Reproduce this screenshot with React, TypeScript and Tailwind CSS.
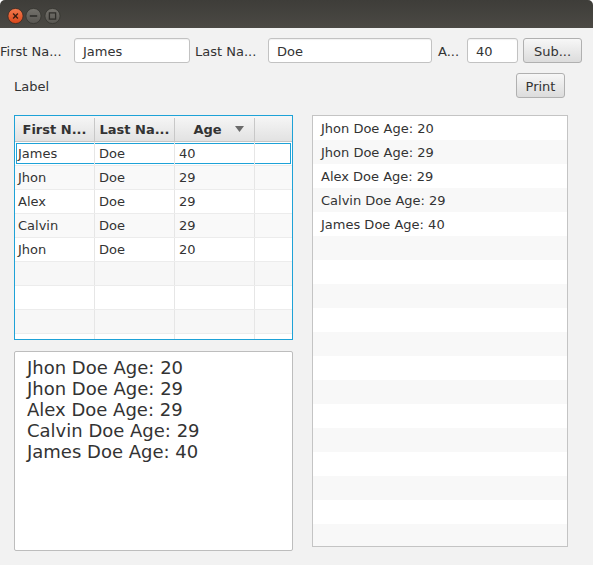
import React from 'react';

interface Person {
  first: string;
  last: string;
  age: number;
}

const people: Person[] = [
  { first: 'James', last: 'Doe', age: 40 },
  { first: 'Jhon', last: 'Doe', age: 29 },
  { first: 'Alex', last: 'Doe', age: 29 },
  { first: 'Calvin', last: 'Doe', age: 29 },
  { first: 'Jhon', last: 'Doe', age: 20 },
];

const summary = [
  'Jhon Doe Age: 20',
  'Jhon Doe Age: 29',
  'Alex Doe Age: 29',
  'Calvin Doe Age: 29',
  'James Doe Age: 40',
];

const font = { fontFamily: '"DejaVu Sans", Verdana, sans-serif' };

// 标题栏按钮
const TitleButtons: React.FC = () => (
  <svg width="64" height="28" viewBox="0 0 64 28">
    <defs>
      <linearGradient id="close" x1="0" y1="0" x2="0" y2="1">
        <stop offset="0" stopColor="#f47a4d" />
        <stop offset="1" stopColor="#d9461a" />
      </linearGradient>
      <linearGradient id="gray" x1="0" y1="0" x2="0" y2="1">
        <stop offset="0" stopColor="#74726c" />
        <stop offset="1" stopColor="#585651" />
      </linearGradient>
    </defs>
    <circle cx="15.5" cy="16" r="7.6" fill="url(#close)" stroke="#3a2a22" strokeWidth="0.8" />
    <path d="M13.1 13.6 L17.9 18.4 M17.9 13.6 L13.1 18.4" stroke="#3b1d10" strokeWidth="1.4" />
    <circle cx="33.5" cy="16" r="7.6" fill="url(#gray)" stroke="#34332f" strokeWidth="0.8" />
    <path d="M29.8 16 L37.2 16" stroke="#2f2e2a" strokeWidth="1.6" />
    <circle cx="52.5" cy="16" r="7.6" fill="url(#gray)" stroke="#34332f" strokeWidth="0.8" />
    <rect x="49.4" y="12.9" width="6.2" height="6.2" fill="none" stroke="#2f2e2a" strokeWidth="1.3" />
  </svg>
);

const Field: React.FC<{ value: string; width: string }> = ({ value, width }) => (
  <div
    className={`${width} h-[25px] bg-white border border-[#c2c2c2] rounded-[3px] flex items-center pl-[8px] pt-[2px] text-[13px] text-[#333] shadow-[inset_0_1px_1px_rgba(0,0,0,0.06)]`}
  >
    {value}
  </div>
);

const Button: React.FC<{ label: string; width: string }> = ({ label, width }) => (
  <div
    className={`${width} h-[25px] rounded-[3px] border border-[#b0b0b0] bg-gradient-to-b from-[#f7f7f7] to-[#dcdcdc] flex items-center justify-center pt-[2px] text-[13px] text-[#333]`}
  >
    {label}
  </div>
);

const App: React.FC = () => {
  const emptyRows = [0, 1, 2, 3];
  const listRows = Array.from({ length: 18 }, (_, i) => i);

  return (
    <div className="w-[593px] h-[565px] bg-white overflow-hidden" style={font}>
      {/* 标题栏 */}
      <div className="h-[28px] rounded-t-[5px] bg-gradient-to-b from-[#3e3d39] to-[#4b4944] flex items-start">
        <TitleButtons />
      </div>

      <div className="h-[537px] bg-[#f2f2f2] text-[13px] text-[#333]">
        {/* 输入行 */}
        <div className="flex items-center pt-[10px]">
          <div className="w-[74px] pt-[2px]">First Na...</div>
          <Field value="James" width="w-[116px]" />
          <div className="w-[73px] ml-[5px] pt-[2px]">Last Na...</div>
          <Field value="Doe" width="w-[164px]" />
          <div className="w-[29px] ml-[6px] pt-[2px]">A...</div>
          <Field value="40" width="w-[51px]" />
          <div className="ml-[5px]">
            <Button label="Sub..." width="w-[59px]" />
          </div>
        </div>

        <div className="flex items-center justify-between mt-[10px] pl-[14px] pr-[28px]">
          <div className="pt-[2px]">Label</div>
          <Button label="Print" width="w-[49px]" />
        </div>

        <div className="flex mt-[17px] pl-[14px]">
          {/* 左侧 */}
          <div className="w-[279px] flex flex-col">
            <div className="h-[225px] border border-[#1ea2d7] bg-white overflow-hidden">
              <div className="h-[26px] flex bg-gradient-to-b from-[#f6f6f6] to-[#e2e2e2] border-b border-[#c5c5c5] font-bold text-[#333] pt-[2px]">
                <div className="w-[80px] border-r border-[#c8c8c8] flex items-center justify-center">First N...</div>
                <div className="w-[80px] border-r border-[#c8c8c8] flex items-center justify-center">Last Na...</div>
                <div className="w-[80px] border-r border-[#c8c8c8] flex items-center justify-center relative">
                  <span className="-ml-[14px]">Age</span>
                  <svg className="absolute right-[10px] top-[8px]" width="9" height="6" viewBox="0 0 9 6">
                    <path d="M0 0 L9 0 L4.5 6 Z" fill="#6a6a6a" />
                  </svg>
                </div>
                <div className="flex-1" />
              </div>
              {people.map((p, i) => (
                <div
                  key={i}
                  className={`h-[24px] flex border-b border-[#ececec] ${i % 2 === 0 ? 'bg-white' : 'bg-[#f9f9f9]'} ${
                    i === 0 ? 'shadow-[inset_0_0_0_1px_#fff,inset_0_0_0_2px_#1ea2d7]' : ''
                  }`}
                >
                  <div className="w-[80px] border-r border-[#e6e6e6] flex items-center pl-[3px]">{p.first}</div>
                  <div className="w-[80px] border-r border-[#e6e6e6] flex items-center pl-[4px]">{p.last}</div>
                  <div className="w-[80px] border-r border-[#e6e6e6] flex items-center pl-[4px]">{p.age}</div>
                  <div className="flex-1" />
                </div>
              ))}
              {emptyRows.map((r) => (
                <div
                  key={r}
                  className={`h-[24px] flex border-b border-[#ececec] ${(r + 5) % 2 === 0 ? 'bg-white' : 'bg-[#f7f7f7]'}`}
                >
                  <div className="w-[80px] border-r border-[#e6e6e6]" />
                  <div className="w-[80px] border-r border-[#e6e6e6]" />
                  <div className="w-[80px] border-r border-[#e6e6e6]" />
                  <div className="flex-1" />
                </div>
              ))}
            </div>

            <div className="mt-[11px] h-[200px] border border-[#bdbdbd] rounded-[2px] bg-white pl-[12px] pt-[5px] text-[18px] leading-[21px] text-[#333]">
              {summary.map((s, i) => (
                <div key={i}>{s}</div>
              ))}
            </div>
          </div>

          {/* 右侧列表 */}
          <div className="ml-[19px] w-[256px] h-[432px] border border-[#c4c4c4] bg-white overflow-hidden">
            {listRows.map((i) => (
              <div
                key={i}
                className={`h-[24px] flex items-center pl-[8px] pt-[2px] ${i % 2 === 0 ? 'bg-white' : 'bg-[#f8f8f8]'}`}
              >
                {summary[i] ?? ''}
              </div>
            ))}
          </div>
        </div>
      </div>
    </div>
  );
};

export default App;
